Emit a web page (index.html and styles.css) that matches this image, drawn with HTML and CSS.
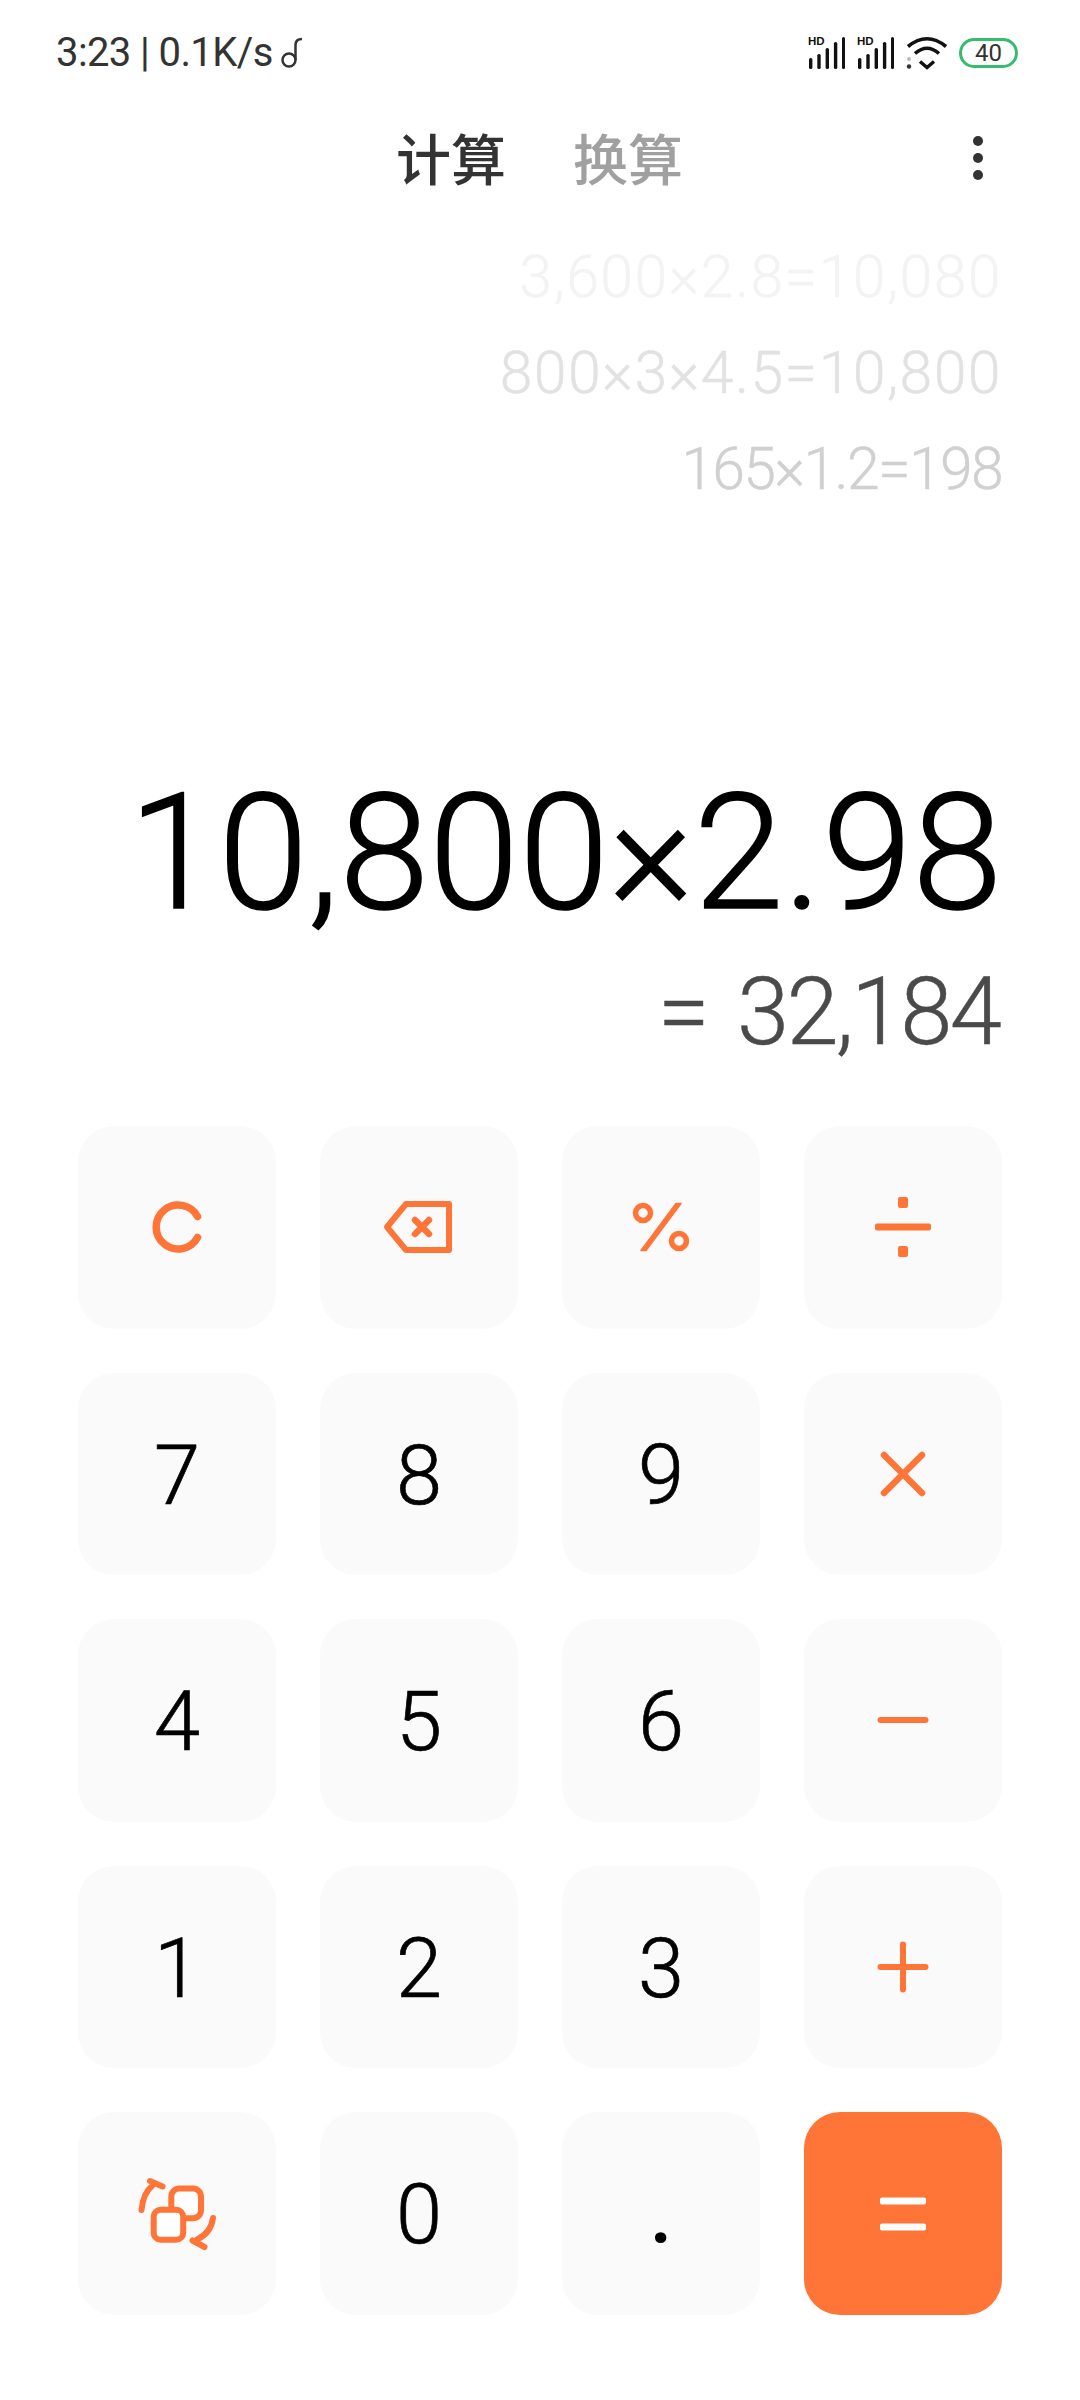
FILE: index.html
```html
<!DOCTYPE html>
<html lang="zh">
<head>
<meta charset="utf-8">
<title>计算</title>
<link rel="stylesheet" href="styles.css">
</head>
<body>
<div class="app">
  <header class="status">
    <div class="status-left"><span>3:23 | 0.1K/s</span><svg class="note" viewBox="0 0 24 32" width="24" height="32"><circle cx="9" cy="23" r="6.500" fill="none" stroke="#333" stroke-width="2.500"/><path d="M15.500 23V8Q15.500 2 22 2" fill="none" stroke="#333" stroke-width="2.500"/></svg></div>
    <div class="status-right">
      <svg class="signal" viewBox="0 0 40 34" width="40" height="34"><text x="0" y="9" class="hd">HD</text><g fill="#111"><rect x="1" y="22" width="3.400" height="11" rx="1.600"/><rect x="9.300" y="18" width="3.400" height="15" rx="1.600"/><rect x="17.600" y="12" width="3.400" height="21" rx="1.600"/><rect x="25.900" y="6" width="3.400" height="27" rx="1.600"/><rect x="34" y="1" width="3" height="32" rx="1.500"/></g></svg>
      <svg class="signal" viewBox="0 0 40 34" width="40" height="34"><text x="0" y="9" class="hd">HD</text><g fill="#111"><rect x="1" y="22" width="3.400" height="11" rx="1.600"/><rect x="9.300" y="18" width="3.400" height="15" rx="1.600"/><rect x="17.600" y="12" width="3.400" height="21" rx="1.600"/><rect x="25.900" y="6" width="3.400" height="27" rx="1.600"/><rect x="34" y="1" width="3" height="32" rx="1.500"/></g></svg>
      <svg class="wifi" viewBox="0 0 42 34" width="42" height="34"><g fill="none" stroke="#111" stroke-width="3.600"><path d="M2 10.500Q21-5 40 10.500"/><path d="M9 17.500Q21 7 33 17.500"/></g><path d="M14 25.500 21 31.500 28 25.500" fill="none" stroke="#111" stroke-width="3.400"/><circle cx="3" cy="23" r="2" fill="#bbb"/><circle cx="3" cy="30.500" r="2.200" fill="#333"/></svg>
      <div class="battery">40</div>
    </div>
  </header>
  <nav class="tabs">
    <span class="tab active">计算</span>
    <span class="tab">换算</span>
    <div class="more"><i></i><i></i><i></i></div>
  </nav>
  <section class="history">
    <div class="line l3">3,600×2.8=10,080</div>
    <div class="line l2">800×3×4.5=10,800</div>
    <div class="line l1">165×1.2=198</div>
  </section>
  <section class="display">
    <div class="expr">10,800×2.98</div>
    <div class="result"><span class="eq">=</span>32,184</div>
  </section>
  <section class="keys">
    <button class="key"><svg class="ico" viewBox="0 0 60 60"><path d="M50.500 19.500A22 22 0 1 0 50.500 40.500" fill="none" stroke="#ff7537" stroke-width="7.500" stroke-linecap="round"/></svg></button>
    <button class="key"><svg class="ico wide" viewBox="0 0 80 60"><path d="M27 7H70V53H27L8 30z" fill="none" stroke="#ff7537" stroke-width="6" stroke-linejoin="round"/><path d="M36 23 50 37M50 23 36 37" fill="none" stroke="#ff7537" stroke-width="6.500" stroke-linecap="round"/></svg></button>
    <button class="key"><svg class="ico wide" viewBox="0 0 80 60"><circle cx="22" cy="16" r="7.500" fill="none" stroke="#ff7537" stroke-width="5.500"/><circle cx="58" cy="44" r="7.500" fill="none" stroke="#ff7537" stroke-width="5.500"/><polygon points="55,6.500 60,6.500 25,53.500 20,53.500" fill="#ff7537" stroke="#ff7537" stroke-width="1.500" stroke-linejoin="round"/></svg></button>
    <button class="key"><svg class="ico tall" viewBox="0 0 80 80"><rect x="12" y="36.500" width="56" height="7" rx="2" fill="#ff7537"/><rect x="35" y="10" width="10" height="11" rx="2" fill="#ff7537"/><rect x="35" y="59" width="10" height="11" rx="2" fill="#ff7537"/></svg></button>

    <button class="key">7</button><button class="key">8</button><button class="key">9</button>
    <button class="key"><svg class="ico" viewBox="0 0 60 60"><path d="M11 11 49 49M49 11 11 49" stroke="#ff7537" stroke-width="6.500" stroke-linecap="round"/></svg></button>

    <button class="key">4</button><button class="key">5</button><button class="key">6</button>
    <button class="key"><svg class="ico" viewBox="0 0 60 60"><path d="M7.500 30H52.500" stroke="#ff7537" stroke-width="6" stroke-linecap="round"/></svg></button>

    <button class="key">1</button><button class="key">2</button><button class="key">3</button>
    <button class="key"><svg class="ico" viewBox="0 0 60 60"><path d="M7.500 30H52.500M30 7.500V52.500" stroke="#ff7537" stroke-width="6" stroke-linecap="round"/></svg></button>

    <button class="key"><svg class="ico tall" viewBox="0 0 80 80"><g fill="none" stroke="#ff7537" stroke-width="6" stroke-linecap="round" stroke-linejoin="round"><rect x="34.300" y="15.500" width="29.700" height="29.700" rx="8" fill="#fff"/><rect x="16.700" y="36.800" width="29.500" height="30" rx="7" fill="#fff"/><path d="M4.500 37Q6 20 16 12"/><path d="M13 8 25.500 13.500"/><path d="M76 45Q74 60 60 66.500"/><path d="M55.500 67.500 67.500 74"/></g></svg></button>
    <button class="key">0</button><button class="key dot">.</button>
    <button class="key equal"><svg class="ico" viewBox="0 0 60 60"><rect x="7" y="14.500" width="46" height="7" rx="2" fill="#fff"/><rect x="7" y="40.500" width="46" height="7" rx="2" fill="#fff"/></svg></button>
  </section>
</div>
</body>
</html>
```

FILE: styles.css
```css
* { box-sizing: border-box; }
html, body { margin: 0; padding: 0; background: #fff; }
body { font-family: "Roboto", "Noto Sans CJK SC", sans-serif; }
.app { width: 1080px; height: 2400px; overflow: hidden; display: flex; flex-direction: column; }

.status { height: 106px; padding: 33px 62px 0 56px; display: flex; justify-content: space-between; align-items: flex-start; }
.status-left { font-size: 40px; line-height: 40px; letter-spacing: -0.600px; color: #333; display: flex; align-items: flex-start; gap: 7px; }
.note { margin-top: 4px; }
.status-right { display: flex; align-items: center; gap: 9px; margin-top: 3px; }
.hd { font: 800 11.500px "Liberation Sans", sans-serif; fill: #111; }
.battery { width: 59px; height: 30px; margin-left: 2px; border: 3px solid #35bd6e; border-radius: 15px; font-size: 24px; line-height: 24px; color: #333; text-align: center; }

.tabs { height: 100px; padding: 0 0 0 396px; display: flex; align-items: flex-start; gap: 67px; position: relative; }
.tab { font-family: "Noto Sans CJK SC", sans-serif; font-size: 55px; line-height: 55px; color: #a0a0a0; font-weight: 500; margin-top: 23px; }
.tab.active { color: #333; }
.more { position: absolute; left: 973px; top: 30px; display: flex; flex-direction: column; gap: 7px; }
.more i { display: block; width: 10px; height: 10px; border-radius: 50%; background: #333; }

.history { padding-right: 78px; text-align: right; font-weight: 300; font-size: 59px; line-height: 96px; margin-top: 23px; -webkit-text-stroke: 0.400px; }
.line { height: 96px; }
.l3 { color: #f3f3f3; letter-spacing: 1.400px; }
.l2 { color: #e2e2e2; letter-spacing: 1.400px; }
.l1 { color: #d0d0d0; letter-spacing: -1.700px; }

.display { margin-top: 256px; padding-right: 78px; text-align: right; }
.expr { font-size: 162px; line-height: 160px; font-weight: 300; color: #000; -webkit-text-stroke: 1.500px; }
.result { font-size: 94px; line-height: 92px; font-weight: 300; color: #4a4a4a; margin-top: 33px; padding-right: 3px; letter-spacing: -2.800px; -webkit-text-stroke: 0.500px; }
.eq { margin-right: 30px; }

.keys { margin: 68px 78px 0; display: grid; grid-template-columns: repeat(4, 198px); grid-auto-rows: 202.500px; gap: 44px; }
.key { border: 0; padding: 3px 0 0; margin: 0; background: #fafafa; border-radius: 36px; font-family: "Roboto", sans-serif; font-size: 83px; font-weight: 300; color: #000; -webkit-text-stroke: 0.700px; display: flex; align-items: center; justify-content: center; }
.key:has(svg) { padding: 0; }
.dot { font-weight: 500; -webkit-text-stroke: 0; }
.equal { background: #ff7537; }
.ico { width: 60px; height: 60px; }
.ico.wide { width: 80px; height: 60px; }
.ico.tall { width: 80px; height: 80px; }
```
